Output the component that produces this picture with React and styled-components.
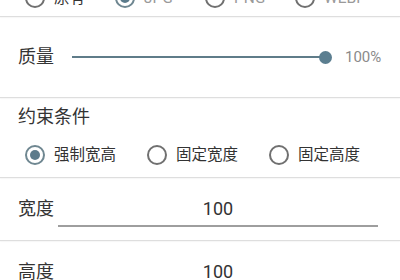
import React from "react";
import styled, { createGlobalStyle } from "styled-components";

const GlobalStyle = createGlobalStyle`
  body {
    margin: 0;
    background: #fff;
    font-family: Roboto, "Noto Sans CJK SC", "Noto Sans", sans-serif;
    color: #333;
    overflow: hidden;
  }
`;

const formats = [
  { label: "原有", checked: false, dim: false },
  { label: "JPG", checked: true, dim: true },
  { label: "PNG", checked: false, dim: true },
  { label: "WEBP", checked: false, dim: true },
];

const constraints = [
  { label: "强制宽高", checked: true },
  { label: "固定宽度", checked: false },
  { label: "固定高度", checked: false },
];

function Radio({ label, checked, dim }) {
  return (
    <RadioItem>
      <Circle checked={checked}>{checked && <Dot />}</Circle>
      <RadioLabel dim={dim}>{label}</RadioLabel>
    </RadioItem>
  );
}

export default function App() {
  return (
    <Page>
      <GlobalStyle />
      <FormatSection>
        {formats.map((f) => (
          <FormatCell key={f.label}>
            <Radio {...f} />
          </FormatCell>
        ))}
      </FormatSection>
      <Divider />
      <QualitySection>
        <Label>质量</Label>
        <Track>
          <Thumb />
        </Track>
        <Percent>100%</Percent>
      </QualitySection>
      <Divider />
      <ConstraintSection>
        <Label>约束条件</Label>
        <RadioRow>
          {constraints.map((c) => (
            <Radio key={c.label} {...c} />
          ))}
        </RadioRow>
      </ConstraintSection>
      <Divider />
      <FieldSection>
        <Label>宽度</Label>
        <Field>100</Field>
      </FieldSection>
      <Divider />
      <FieldSection>
        <Label>高度</Label>
        <Field>100</Field>
      </FieldSection>
    </Page>
  );
}

const Page = styled.div`
  width: 400px;
  height: 280px;
  overflow: hidden;
  display: flex;
  flex-direction: column;
`;

const Divider = styled.div`
  height: 1px;
  flex-shrink: 0;
  background: #dedede;
  box-shadow: 0 1px 1px rgba(0, 0, 0, 0.04);
`;

const FormatSection = styled.div`
  margin-top: -20px;
  height: 36px;
  flex-shrink: 0;
  display: flex;
  align-items: center;
  padding-left: 25px;
`;

const FormatCell = styled.div`
  width: 90px;
`;

const RadioItem = styled.div`
  display: flex;
  align-items: center;
  gap: 9px;
`;

const Circle = styled.div`
  width: 20px;
  height: 20px;
  box-sizing: border-box;
  border-radius: 50%;
  border: 2px solid ${({ checked }) => (checked ? "#6f8791" : "#707070")};
  display: flex;
  align-items: center;
  justify-content: center;
  flex-shrink: 0;
`;

const Dot = styled.div`
  width: 10px;
  height: 10px;
  border-radius: 50%;
  background: #5c7b8b;
`;

const RadioLabel = styled.span`
  font-size: 15.5px;
  line-height: 24px;
  color: ${({ dim }) => (dim ? "#9a9a9a" : "#333")};
  white-space: nowrap;
`;

const Label = styled.div`
  font-size: 18px;
  line-height: 24px;
  color: #333;
  white-space: nowrap;
`;

const QualitySection = styled.div`
  height: 80px;
  flex-shrink: 0;
  display: flex;
  align-items: center;
  padding: 0 18px;
`;

const Track = styled.div`
  flex: 1;
  height: 2px;
  margin: 0 19px 0 18px;
  background: #5f7c89;
  position: relative;
`;

const Thumb = styled.div`
  position: absolute;
  right: -6px;
  top: 50%;
  width: 13px;
  height: 13px;
  margin-top: -6.5px;
  border-radius: 50%;
  background: #5b7e90;
`;

const Percent = styled.div`
  font-size: 15px;
  color: #8a8a8a;
  width: 37px;
`;

const ConstraintSection = styled.div`
  height: 79px;
  flex-shrink: 0;
  box-sizing: border-box;
  padding: 7px 18px 0;
  display: flex;
  flex-direction: column;
  gap: 14px;
`;

const RadioRow = styled.div`
  display: flex;
  align-items: center;
  gap: 31px;
  padding-left: 7px;
`;

const FieldSection = styled.div`
  height: 62px;
  flex-shrink: 0;
  box-sizing: border-box;
  padding: 13px 22px 0 18px;
  display: flex;
  align-items: flex-start;
  gap: 4px;
  & > ${Label} {
    line-height: 36px;
  }
`;

const Field = styled.div`
  flex: 1;
  height: 36px;
  box-sizing: border-box;
  border-bottom: 2px solid #9e9e9e;
  font-size: 18px;
  line-height: 35px;
  text-align: center;
  color: #333;
`;
